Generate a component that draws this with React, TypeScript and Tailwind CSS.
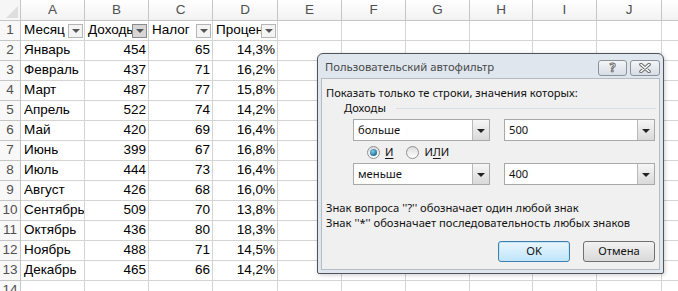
import React from "react";

const colLetters = ["A", "B", "C", "D", "E", "F", "G", "H", "I", "J"];
const colWidths = [
  "w-[64px]",
  "w-[64px]",
  "w-[64px]",
  "w-[65px]",
  "w-[64px]",
  "w-[64px]",
  "w-[64px]",
  "w-[63px]",
  "w-[64px]",
  "w-[65px]",
];

const headers = ["Месяц", "Доходы", "Налог", "Процент"];

const rows: [string, number, number, string][] = [
  ["Январь", 454, 65, "14,3%"],
  ["Февраль", 437, 71, "16,2%"],
  ["Март", 487, 77, "15,8%"],
  ["Апрель", 522, 74, "14,2%"],
  ["Май", 420, 69, "16,4%"],
  ["Июнь", 399, 67, "16,8%"],
  ["Июль", 444, 73, "16,4%"],
  ["Август", 426, 68, "16,0%"],
  ["Сентябрь", 509, 70, "13,8%"],
  ["Октябрь", 436, 80, "18,3%"],
  ["Ноябрь", 488, 71, "14,5%"],
  ["Декабрь", 465, 66, "14,2%"],
];

const cell = "shrink-0 h-[20px] border-r border-b border-[#d4d4d4] relative overflow-hidden";

function FilterButton({ active }: { active?: boolean }) {
  return (
    <div
      className={
        "absolute right-[1px] top-[3px] w-[15px] h-[14px] border flex items-center justify-center " +
        (active ? "border-[#8a8a8a] bg-[#d6d6d6]" : "border-[#b5b5b5] bg-[#f4f4f4]")
      }
    >
      <div className="w-0 h-0 border-l-[4px] border-r-[4px] border-t-[4px] border-l-transparent border-r-transparent border-t-[#555]" />
    </div>
  );
}

function ComboArrow() {
  return (
    <div className="w-[17px] h-full border-l border-[#b9b9b9] bg-gradient-to-b from-[#f6f6f6] to-[#d9d9d9] flex items-center justify-center">
      <div className="w-0 h-0 border-l-[4px] border-r-[4px] border-t-[4px] border-l-transparent border-r-transparent border-t-[#222] mt-[2px]" />
    </div>
  );
}

function Combo({ value, width }: { value: string; width: string }) {
  return (
    <div className={"h-[22px] border border-[#a9a9a9] bg-white flex " + width}>
      <div className="flex-1 pl-[4px] flex items-center">{value}</div>
      <ComboArrow />
    </div>
  );
}

function Radio({ checked }: { checked?: boolean }) {
  return (
    <div className="w-[13px] h-[13px] rounded-full border border-[#8e8f8f] bg-gradient-to-b from-[#dcdcdc] to-[#ffffff] flex items-center justify-center">
      {checked && (
        <div className="w-[7px] h-[7px] rounded-full bg-[radial-gradient(circle_at_40%_35%,#7fd0e6,#1f6f9c_70%)]" />
      )}
    </div>
  );
}

function Dialog() {
  return (
    <div className="absolute left-[317px] top-[53px] w-[347px] h-[221px] rounded-t-[6px] rounded-b-[2px] border border-[#505359] bg-[#dfe6ee] flex flex-col shadow-[1px_1px_4px_rgba(0,0,0,0.2)] font-['Noto_Sans',sans-serif]">
      <div className="h-[24px] flex items-center justify-between pl-[7px] pr-[3px]">
        <span className="text-[11.3px] text-[#4a4a4a] mt-[2px]">Пользовательский автофильтр</span>
        <div className="flex gap-[3px] mt-[4px]">
          <div className="w-[29px] h-[16px] rounded-[3px] border border-[#8c9299] bg-gradient-to-b from-[#f3f5f8] to-[#d7dde5] flex items-center justify-center">
            <span className="text-[12px] leading-none font-bold text-white [-webkit-text-stroke:0.8px_#5c5c5c]">?</span>
          </div>
          <div className="w-[30px] h-[16px] rounded-[3px] border border-[#8c9299] bg-gradient-to-b from-[#f3f5f8] to-[#d7dde5] flex items-center justify-center">
            <svg width="12" height="10" viewBox="0 0 12 10">
              <path d="M2 1.5 L10 8.5 M10 1.5 L2 8.5" stroke="#6a6a6a" strokeWidth="3.6" strokeLinecap="round" />
              <path d="M2 1.5 L10 8.5 M10 1.5 L2 8.5" stroke="#ffffff" strokeWidth="1.6" strokeLinecap="round" />
            </svg>
          </div>
        </div>
      </div>
      <div className="flex-1 mx-[3px] mb-[3px] bg-[#f0f0f0] border border-[#b4bcc6] text-[11.2px] text-[#111] flex flex-col pt-[6px] pb-[6px]">
        <div className="h-[15px] leading-[15px] pl-[4px]">Показать только те строки, значения которых:</div>
        <div className="h-[15px] leading-[15px] pl-[22px] pr-[3px] flex items-center">
          <span>Доходы</span>
          <div className="flex-1 ml-[10px] border-t border-[#d5dfe5] mt-[2px]" />
        </div>
        <div className="mt-[4px] pl-[31px] flex gap-[14px]">
          <Combo value="больше" width="w-[137px]" />
          <Combo value="500" width="w-[151px]" />
        </div>
        <div className="mt-[4px] h-[14px] pl-[45px] flex items-center">
          <Radio checked />
          <span className="ml-[5px] underline underline-offset-2">И</span>
          <div className="ml-[13px]">
            <Radio />
          </div>
          <span className="ml-[5px]">
            И<span className="underline underline-offset-2">Л</span>И
          </span>
        </div>
        <div className="mt-[4px] pl-[31px] flex gap-[14px]">
          <Combo value="меньше" width="w-[137px]" />
          <Combo value="400" width="w-[151px]" />
        </div>
        <div className="mt-[15px] h-[15px] leading-[15px] pl-[4px]">Знак вопроса ''?'' обозначает один любой знак</div>
        <div className="h-[15px] leading-[15px] pl-[4px]">Знак ''*'' обозначает последовательность любых знаков</div>
        <div className="mt-[11px] flex justify-end gap-[13px] pr-[4px]">
          <div className="w-[72px] h-[21px] rounded-[3px] border border-[#3c7fb1] bg-gradient-to-b from-[#eaf6fd] to-[#bee6fd] flex items-center justify-center shadow-[inset_0_0_0_1px_#c4e5f6]">
            OK
          </div>
          <div className="w-[72px] h-[21px] rounded-[3px] border border-[#707070] bg-gradient-to-b from-[#f2f2f2] to-[#d9d9d9] flex items-center justify-center">
            Отмена
          </div>
        </div>
      </div>
    </div>
  );
}

export default function App() {
  return (
    <div className="relative w-[678px] h-[291px] overflow-hidden bg-white font-['Liberation_Sans',sans-serif] text-[13.5px] text-black">
      {/* column headers */}
      <div className="flex h-[21px]">
        <div className="shrink-0 w-[21px] h-[21px] border-r border-b border-[#c6c6c6] bg-[#f6f6f6] flex items-end justify-end p-[2px]">
          <svg width="12" height="12" viewBox="0 0 12 12">
            <path d="M12 0 L12 12 L0 12 Z" fill="#dedede" />
          </svg>
        </div>
        {colLetters.map((c, i) => (
          <div
            key={c}
            className={
              "shrink-0 h-[21px] border-r border-b border-[#c6c6c6] bg-gradient-to-b from-[#ffffff] to-[#f2f2f2] flex items-center justify-center text-[#505050] " +
              colWidths[i]
            }
          >
            {c}
          </div>
        ))}
        <div className="flex-1 h-[21px] border-b border-[#c6c6c6] bg-gradient-to-b from-[#ffffff] to-[#f2f2f2]" />
      </div>

      {Array.from({ length: 14 }).map((_, r) => {
        const rowNum = r + 1;
        return (
          <div key={rowNum} className="flex h-[20px]">
            <div className="shrink-0 w-[21px] h-[20px] border-r border-b border-[#c6c6c6] bg-[#f8f8f8] flex items-center justify-center text-[#505050]">
              {rowNum}
            </div>
            {colLetters.map((c, ci) => {
              let content: React.ReactNode = null;
              let align = "justify-start pl-[3px]";
              if (rowNum === 1 && ci < 4) {
                content = (
                  <>
                    <span className="whitespace-nowrap">{headers[ci]}</span>
                    <FilterButton active={ci === 1} />
                  </>
                );
              } else if (rowNum >= 2 && rowNum <= 13 && ci < 4) {
                const d = rows[rowNum - 2];
                content = d[ci];
                if (ci > 0) align = "justify-end pr-[2px]";
              }
              return (
                <div key={c} className={cell + " flex items-center " + align + " " + colWidths[ci]}>
                  {content}
                </div>
              );
            })}
            <div className="flex-1 h-[20px] border-b border-[#d4d4d4]" />
          </div>
        );
      })}

      <Dialog />
    </div>
  );
}
